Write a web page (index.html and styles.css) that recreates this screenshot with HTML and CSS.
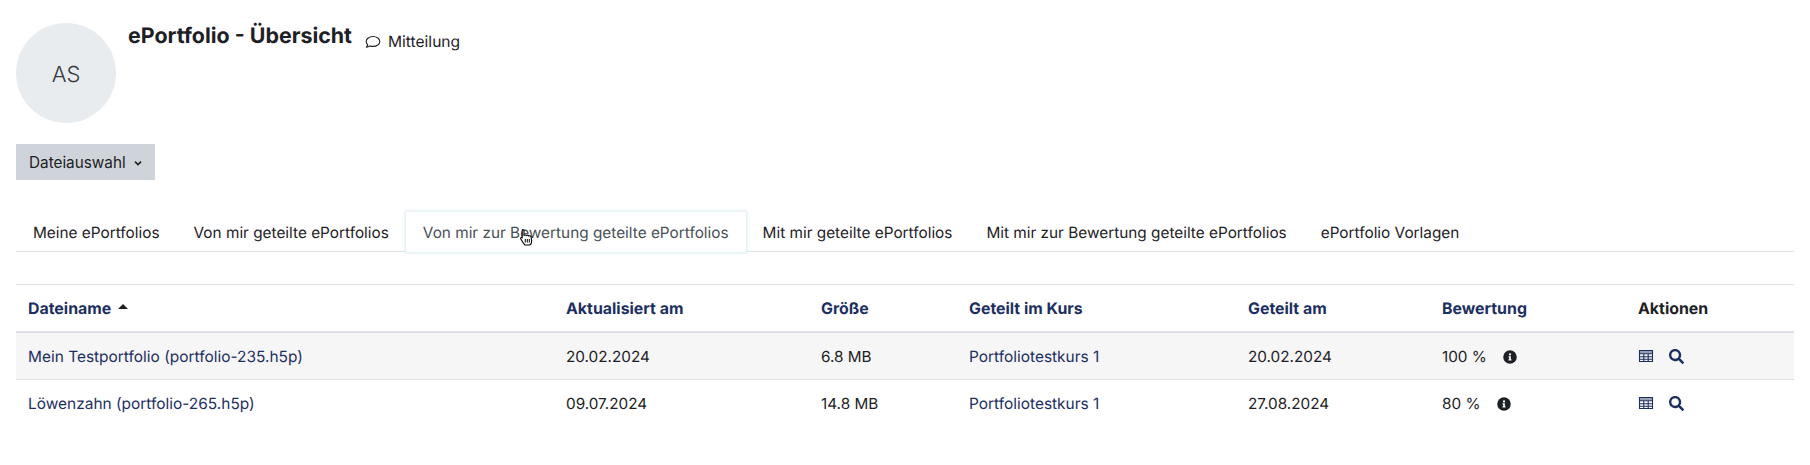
FILE: index.html
```html
<!DOCTYPE html>
<html lang="de">
<head>
    <meta charset="UTF-8">
    <title>ePortfolio - Übersicht</title>
    <link rel="stylesheet" href="styles.css">
</head>
<body>
    <header class="head">
        <div class="avatar">AS</div>
        <div class="head-text">
            <h1>ePortfolio - Übersicht</h1>
            <a class="message" href="#">
                <svg class="message-icon" viewBox="0 0 16 16" width="16" height="16"><path d="M8 2.500c-3.800 0-6.800 2.200-6.800 5 0 1.200.6 2.300 1.500 3.100-.2.9-.7 1.900-1.300 2.600 1.300-.1 2.600-.6 3.500-1.300.9.3 2 .5 3.100.5 3.800 0 6.800-2.200 6.800-4.900s-3-5-6.800-5z" fill="none" stroke="#1d2125" stroke-width="1.100" stroke-linejoin="round"/></svg>
                Mitteilung
            </a>
        </div>
    </header>

    <button class="select-btn" type="button">Dateiauswahl
        <svg viewBox="0 0 10 10" width="10" height="10"><path d="M2 3.600l3 3 3-3" fill="none" stroke="#1d2125" stroke-width="1.600"/></svg>
    </button>

    <nav class="tabs">
        <a href="#">Meine ePortfolios</a>
        <a href="#">Von mir geteilte ePortfolios</a>
        <a href="#" class="active">Von mir zur Bewertung geteilte ePortfolios<svg class="cursor" viewBox="0 0 16 18" width="16" height="18"><path d="M3.500 1.500c1 0 1.500.6 1.500 1.500v4.500c.5-.6 2-.6 2.400.1.6-.5 2-.4 2.300.4.7-.4 2.100-.2 2.400.9l.6 4c0 1.800-1 3.600-2 4.100H6c-1-.8-2.800-3.600-4.300-6.200-.5-1 .6-1.800 1.500-1L3.200 9V3c0-1 0-1.500.3-1.500z" fill="#fff" stroke="#000" stroke-width="1.100" stroke-linejoin="round"/><path d="M6.300 11v3.500M8.300 11v3.500M10.300 11v3.500" stroke="#000" stroke-width="1"/></svg></a>
        <a href="#">Mit mir geteilte ePortfolios</a>
        <a href="#">Mit mir zur Bewertung geteilte ePortfolios</a>
        <a href="#">ePortfolio Vorlagen</a>
    </nav>

    <table class="files">
        <thead>
            <tr>
                <th class="col-name"><a href="#">Dateiname</a> <span class="sort-up"></span></th>
                <th class="col-date"><a href="#">Aktualisiert am</a></th>
                <th class="col-size"><a href="#">Größe</a></th>
                <th class="col-course"><a href="#">Geteilt im Kurs</a></th>
                <th class="col-shared"><a href="#">Geteilt am</a></th>
                <th class="col-grade"><a href="#">Bewertung</a></th>
                <th>Aktionen</th>
            </tr>
        </thead>
        <tbody>
            <tr class="odd">
                <td><a href="#">Mein Testportfolio (portfolio-235.h5p)</a></td>
                <td>20.02.2024</td>
                <td>6.8 MB</td>
                <td><a href="#">Portfoliotestkurs 1</a></td>
                <td>20.02.2024</td>
                <td>100 % <svg class="info" viewBox="0 0 512 512" width="14" height="14"><path fill="#1d2125" d="M256 8a248 248 0 1 0 0 496 248 248 0 0 0 0-496zm0 110a42 42 0 1 1 0 84 42 42 0 0 1 0-84zm56 254c0 7-5 12-12 12h-88c-7 0-12-5-12-12v-24c0-7 5-12 12-12h12v-64h-12c-7 0-12-5-12-12v-24c0-7 5-12 12-12h64c7 0 12 5 12 12v100h12c7 0 12 5 12 12z"/></svg></td>
                <td class="actions">
                    <svg viewBox="0 0 16 16" width="16" height="16"><path d="M1.500 2.500h13v11h-13zM1.500 5.800h13M1.500 8.700h13M1.500 11.300h13M5.800 5.800v7.700M10.200 5.800v7.700" fill="none" stroke="#1d2f5f" stroke-width="1.100"/><path d="M1.500 2.500h13v3h-13z" fill="#1d2f5f" fill-opacity=".45"/></svg>
                    <svg viewBox="0 0 512 512" width="15" height="15"><path fill="#1d2f5f" d="M505 442.700L405.300 343c-4.500-4.500-10.600-7-17-7H372c27.600-35.300 44-79.700 44-128C416 93.100 322.900 0 208 0S0 93.100 0 208s93.100 208 208 208c48.300 0 92.700-16.400 128-44v16.300c0 6.400 2.500 12.500 7 17l99.700 99.700c9.400 9.400 24.600 9.400 33.900 0l28.300-28.300c9.400-9.400 9.400-24.600.1-34zM208 336c-70.700 0-128-57.200-128-128 0-70.700 57.200-128 128-128 70.700 0 128 57.200 128 128 0 70.700-57.200 128-128 128z"/></svg>
                </td>
            </tr>
            <tr>
                <td><a href="#">Löwenzahn (portfolio-265.h5p)</a></td>
                <td>09.07.2024</td>
                <td>14.8 MB</td>
                <td><a href="#">Portfoliotestkurs 1</a></td>
                <td>27.08.2024</td>
                <td>80 % <svg class="info" viewBox="0 0 512 512" width="14" height="14"><path fill="#1d2125" d="M256 8a248 248 0 1 0 0 496 248 248 0 0 0 0-496zm0 110a42 42 0 1 1 0 84 42 42 0 0 1 0-84zm56 254c0 7-5 12-12 12h-88c-7 0-12-5-12-12v-24c0-7 5-12 12-12h12v-64h-12c-7 0-12-5-12-12v-24c0-7 5-12 12-12h64c7 0 12 5 12 12v100h12c7 0 12 5 12 12z"/></svg></td>
                <td class="actions">
                    <svg viewBox="0 0 16 16" width="16" height="16"><path d="M1.500 2.500h13v11h-13zM1.500 5.800h13M1.500 8.700h13M1.500 11.300h13M5.800 5.800v7.700M10.200 5.800v7.700" fill="none" stroke="#1d2f5f" stroke-width="1.100"/><path d="M1.500 2.500h13v3h-13z" fill="#1d2f5f" fill-opacity=".45"/></svg>
                    <svg viewBox="0 0 512 512" width="15" height="15"><path fill="#1d2f5f" d="M505 442.700L405.300 343c-4.500-4.500-10.600-7-17-7H372c27.600-35.300 44-79.700 44-128C416 93.100 322.900 0 208 0S0 93.100 0 208s93.100 208 208 208c48.300 0 92.700-16.400 128-44v16.300c0 6.400 2.500 12.500 7 17l99.700 99.700c9.400 9.400 24.600 9.400 33.900 0l28.300-28.300c9.400-9.400 9.400-24.600.1-34zM208 336c-70.700 0-128-57.200-128-128 0-70.700 57.200-128 128-128 70.700 0 128 57.200 128 128 0 70.700-57.200 128-128 128z"/></svg>
                </td>
            </tr>
        </tbody>
    </table>
</body>
</html>
```

FILE: styles.css
```css
body {
    font-family: Inter, "Liberation Sans", sans-serif;
    font-size: 15.3px;
    line-height: 22px;
    text-rendering: geometricPrecision;
    color: #1d2125;
    background-color: white;
    margin: 0;
    padding: 23px 16px 0;
}
a {
    color: inherit;
    text-decoration: none;
}
.head {
    display: flex;
    height: 100px;
}
.avatar {
    width: 100px;
    height: 100px;
    border-radius: 50%;
    background-color: #e9ecef;
    display: flex;
    align-items: center;
    justify-content: center;
    font-size: 22px;
    font-weight: 300;
    padding-top: 3px;
    box-sizing: border-box;
    color: #343a40;
    margin-right: 12px;
}
.head-text {
    display: flex;
    align-items: flex-start;
}
h1 {
    font-size: 21.4px;
    line-height: 26px;
    font-weight: 700;
    margin: 0 13px 0 0;
}
.message {
    display: flex;
    align-items: center;
    gap: 7px;
    margin-top: 8px;
    font-size: 15.6px;
}
.select-btn {
    display: flex;
    align-items: center;
    gap: 7px;
    height: 36px;
    margin-top: 21px;
    padding: 2px 12px 0 13px;
    border: none;
    background-color: #ced4da;
    color: #1d2125;
    font: inherit;
}
.tabs {
    display: flex;
    height: 39px;
    margin-top: 32px;
    border-bottom: 1px solid #dee2e6;
    font-size: 15.35px;
}
.tabs a {
    position: relative;
    padding: 10px 17px 8px;
    height: 40px;
    box-sizing: border-box;
}
.tabs .active {
    color: #495057;
    background-color: white;
    height: 40px;
    box-shadow: 0 0 3px 1px #d5e8ea;
}
.cursor {
    position: absolute;
    left: 113px;
    top: 16px;
}
.files {
    width: 100%;
    margin-top: 32px;
    border-collapse: collapse;
    table-layout: fixed;
}
.files th, .files td {
    text-align: left;
    padding: 13px 12px 11px;
    border-top: 1px solid #dee2e6;
}
.files th {
    height: 47px;
    box-sizing: border-box;
    font-size: 15.9px;
    font-weight: 700;
    border-bottom: 2px solid #dee2e6;
}
.files td {
    height: 47px;
    box-sizing: border-box;
}
.files a {
    color: #1d2f5f;
}
.files td a {
    font-size: 15.45px;
}
.odd {
    background-color: #f6f6f6;
}
.col-name { width: 538px; }
.col-date { width: 255px; }
.col-size { width: 148px; }
.col-course { width: 279px; }
.col-shared { width: 194px; }
.col-grade { width: 196px; }
.sort-up {
    display: inline-block;
    width: 0;
    height: 0;
    margin: 0 0 5px 3px;
    border-left: 5px solid transparent;
    border-right: 5px solid transparent;
    border-bottom: 5px solid #1d2125;
}
.info {
    margin-left: 12px;
    vertical-align: -2px;
}
.actions svg {
    margin-right: 11px;
    vertical-align: -2px;
}
```
